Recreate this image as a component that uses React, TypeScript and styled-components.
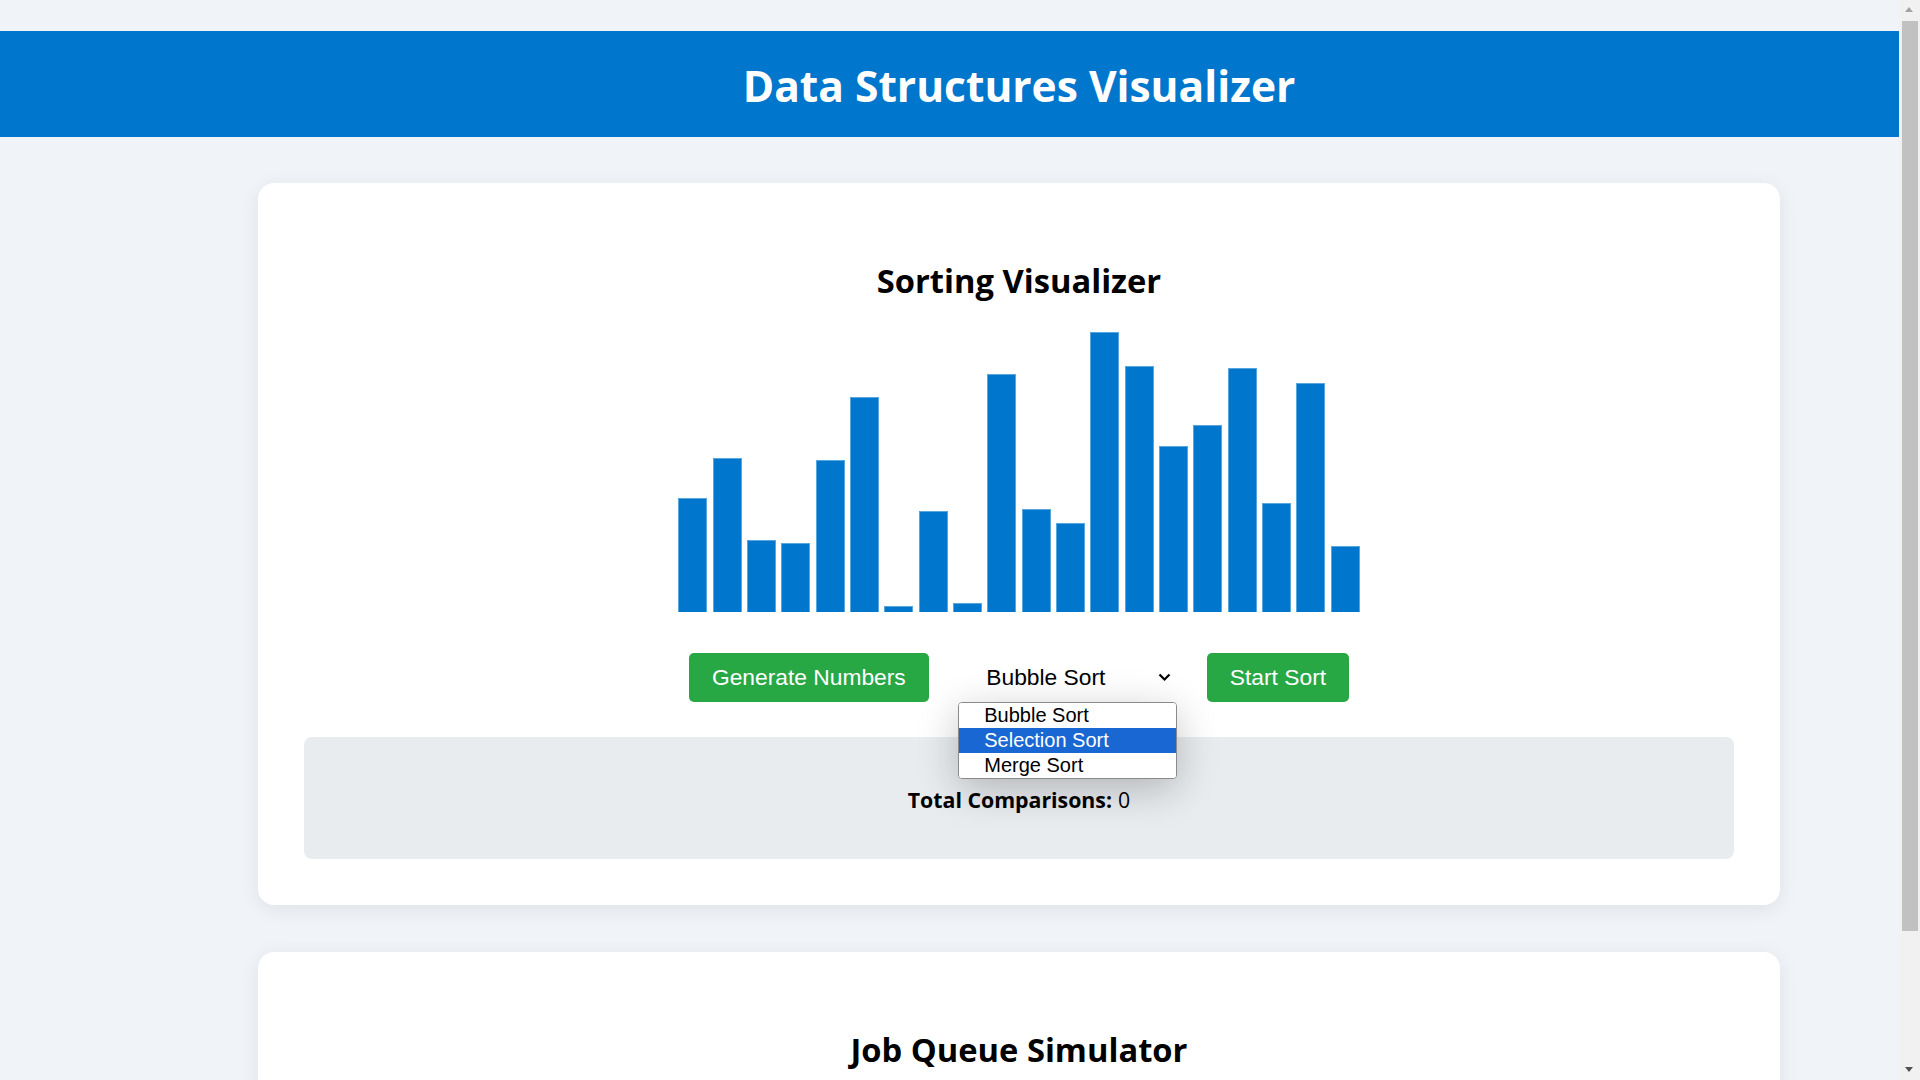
import React from 'react';
import styled, { createGlobalStyle } from 'styled-components';

const Global = createGlobalStyle`
  html, body { margin: 0; padding: 0; }
  body {
    background: #f0f4f8;
    font-family: 'Open Sans', 'Noto Sans', sans-serif;
    color: #000;
  }
`;

const Page = styled.div`
  padding-top: 31px;
  padding-bottom: 33px;
`;

const Header = styled.header`
  background: #0077cc;
  height: 106px;
  display: flex;
  align-items: center;
  justify-content: center;
  padding-left: 118px;
`;

const Title = styled.h1`
  margin: 4px 0 0;
  color: #fff;
  font-size: 42.5px;
  font-weight: 700;
  line-height: 1;
`;

const Main = styled.main`
  padding: 46px 0 0 118px;
  display: flex;
  flex-direction: column;
  gap: 47px;
`;

const Card = styled.section<{ $minHeight?: number }>`
  width: 1522px;
  margin: 0 auto;
  box-sizing: border-box;
  padding: 46px;
  background: #fff;
  border-radius: 16px;
  box-shadow: 0 4px 20px rgba(0, 0, 0, 0.08);
  display: flex;
  flex-direction: column;
  align-items: center;
  min-height: ${(p) => (p.$minHeight ? `${p.$minHeight}px` : 'auto')};
`;

const SectionTitle = styled.h2`
  margin: 31.5px 0 0;
  font-size: 32.7px;
  line-height: 40px;
  font-weight: 700;
`;

const Bars = styled.div`
  display: flex;
  align-items: flex-end;
  gap: 5.34px;
  height: 300px;
  margin-top: 11px;
`;

const Bar = styled.div`
  width: 29px;
  box-sizing: border-box;
  background: #0077cc;
  border: 1px solid #58a6de;
  border-bottom: none;
`;

const Controls = styled.div`
  display: flex;
  align-items: center;
  gap: 29.5px;
  margin-top: 41.5px;
  position: relative;
  z-index: 2;
`;

const Button = styled.button`
  height: 49px;
  padding: 0 23px;
  background: #28a745;
  color: #fff;
  border: none;
  border-radius: 5px;
  font-family: 'Liberation Sans', Arial, sans-serif;
  font-size: 22.8px;
  cursor: pointer;
`;

const SelectBox = styled.div`
  position: relative;
  width: 219px;
  height: 49px;
  box-sizing: border-box;
  display: flex;
  align-items: center;
  justify-content: space-between;
  padding: 0 6.5px 0 28px;
  background: #fff;
  font-family: 'Liberation Sans', Arial, sans-serif;
  font-size: 22.8px;
`;

const Dropdown = styled.ul`
  position: absolute;
  top: 100%;
  left: 0;
  width: 219px;
  box-sizing: border-box;
  margin: 0;
  padding: 0;
  list-style: none;
  background: #fff;
  border: 1px solid #8a8a8a;
  border-radius: 4px;
  overflow: hidden;
  box-shadow: 0 10px 40px rgba(0, 0, 0, 0.24);
`;

const Option = styled.li<{ $active?: boolean }>`
  height: 25px;
  line-height: 25px;
  padding-left: 25px;
  font-family: 'Liberation Sans', Arial, sans-serif;
  font-size: 20px;
  background: ${(p) => (p.$active ? '#1967d2' : '#fff')};
  color: ${(p) => (p.$active ? '#fff' : '#000')};
`;

const Stats = styled.div`
  width: 100%;
  height: 122px;
  margin-top: 35px;
  box-sizing: border-box;
  padding-top: 2px;
  background: #e9ecef;
  border-radius: 8px;
  display: flex;
  align-items: center;
  justify-content: center;
  font-size: 21.3px;
`;

const Strong = styled.strong`
  font-weight: 700;
  margin-right: 6px;
`;

/* drawing of the browser's classic scrollbar, laid over the page's right edge */
const ScrollTrack = styled.div`
  position: fixed;
  top: 0;
  right: 0;
  width: 21px;
  height: 100vh;
  background: #f1f1f1;
  z-index: 10;
`;

const ScrollThumb = styled.div`
  position: absolute;
  top: 21px;
  left: 3px;
  width: 16px;
  height: 910px;
  background: #c1c1c1;
`;

const ScrollArrow = styled.div<{ $down?: boolean }>`
  position: absolute;
  left: 6px;
  width: 0;
  height: 0;
  border-left: 4.5px solid transparent;
  border-right: 4.5px solid transparent;
  ${(p) =>
    p.$down
      ? 'bottom: 8px; border-top: 5px solid #505050;'
      : 'top: 7px; border-bottom: 5px solid #a3a3a3;'}
`;

const heights = [114, 154, 72, 69, 152, 215, 6, 101, 9, 238, 103, 89, 280, 246, 166, 187, 244, 109, 229, 66];

const Chevron = () => (
  <svg width="13" height="9" viewBox="0 0 13 9" aria-hidden="true">
    <polyline points="1.5,1.5 6.5,6.5 11.5,1.5" fill="none" stroke="#000" strokeWidth="2.2" />
  </svg>
);

export default function App() {
  return (
    <>
      <Global />
      <Page>
        <Header>
          <Title>Data Structures Visualizer</Title>
        </Header>
        <Main>
          <Card>
            <SectionTitle>Sorting Visualizer</SectionTitle>
            <Bars>
              {heights.map((h, i) => (
                <Bar key={i} style={{ height: h }} />
              ))}
            </Bars>
            <Controls>
              <Button>Generate Numbers</Button>
              <SelectBox>
                <span>Bubble Sort</span>
                <Chevron />
                <Dropdown>
                  <Option>Bubble Sort</Option>
                  <Option $active>Selection Sort</Option>
                  <Option>Merge Sort</Option>
                </Dropdown>
              </SelectBox>
              <Button>Start Sort</Button>
            </Controls>
            <Stats>
              <Strong>Total Comparisons:</Strong>0
            </Stats>
          </Card>
          <Card $minHeight={250}>
            <SectionTitle>Job Queue Simulator</SectionTitle>
          </Card>
        </Main>
      </Page>
      <ScrollTrack aria-hidden="true">
        <ScrollArrow />
        <ScrollThumb />
        <ScrollArrow $down />
      </ScrollTrack>
    </>
  );
}
